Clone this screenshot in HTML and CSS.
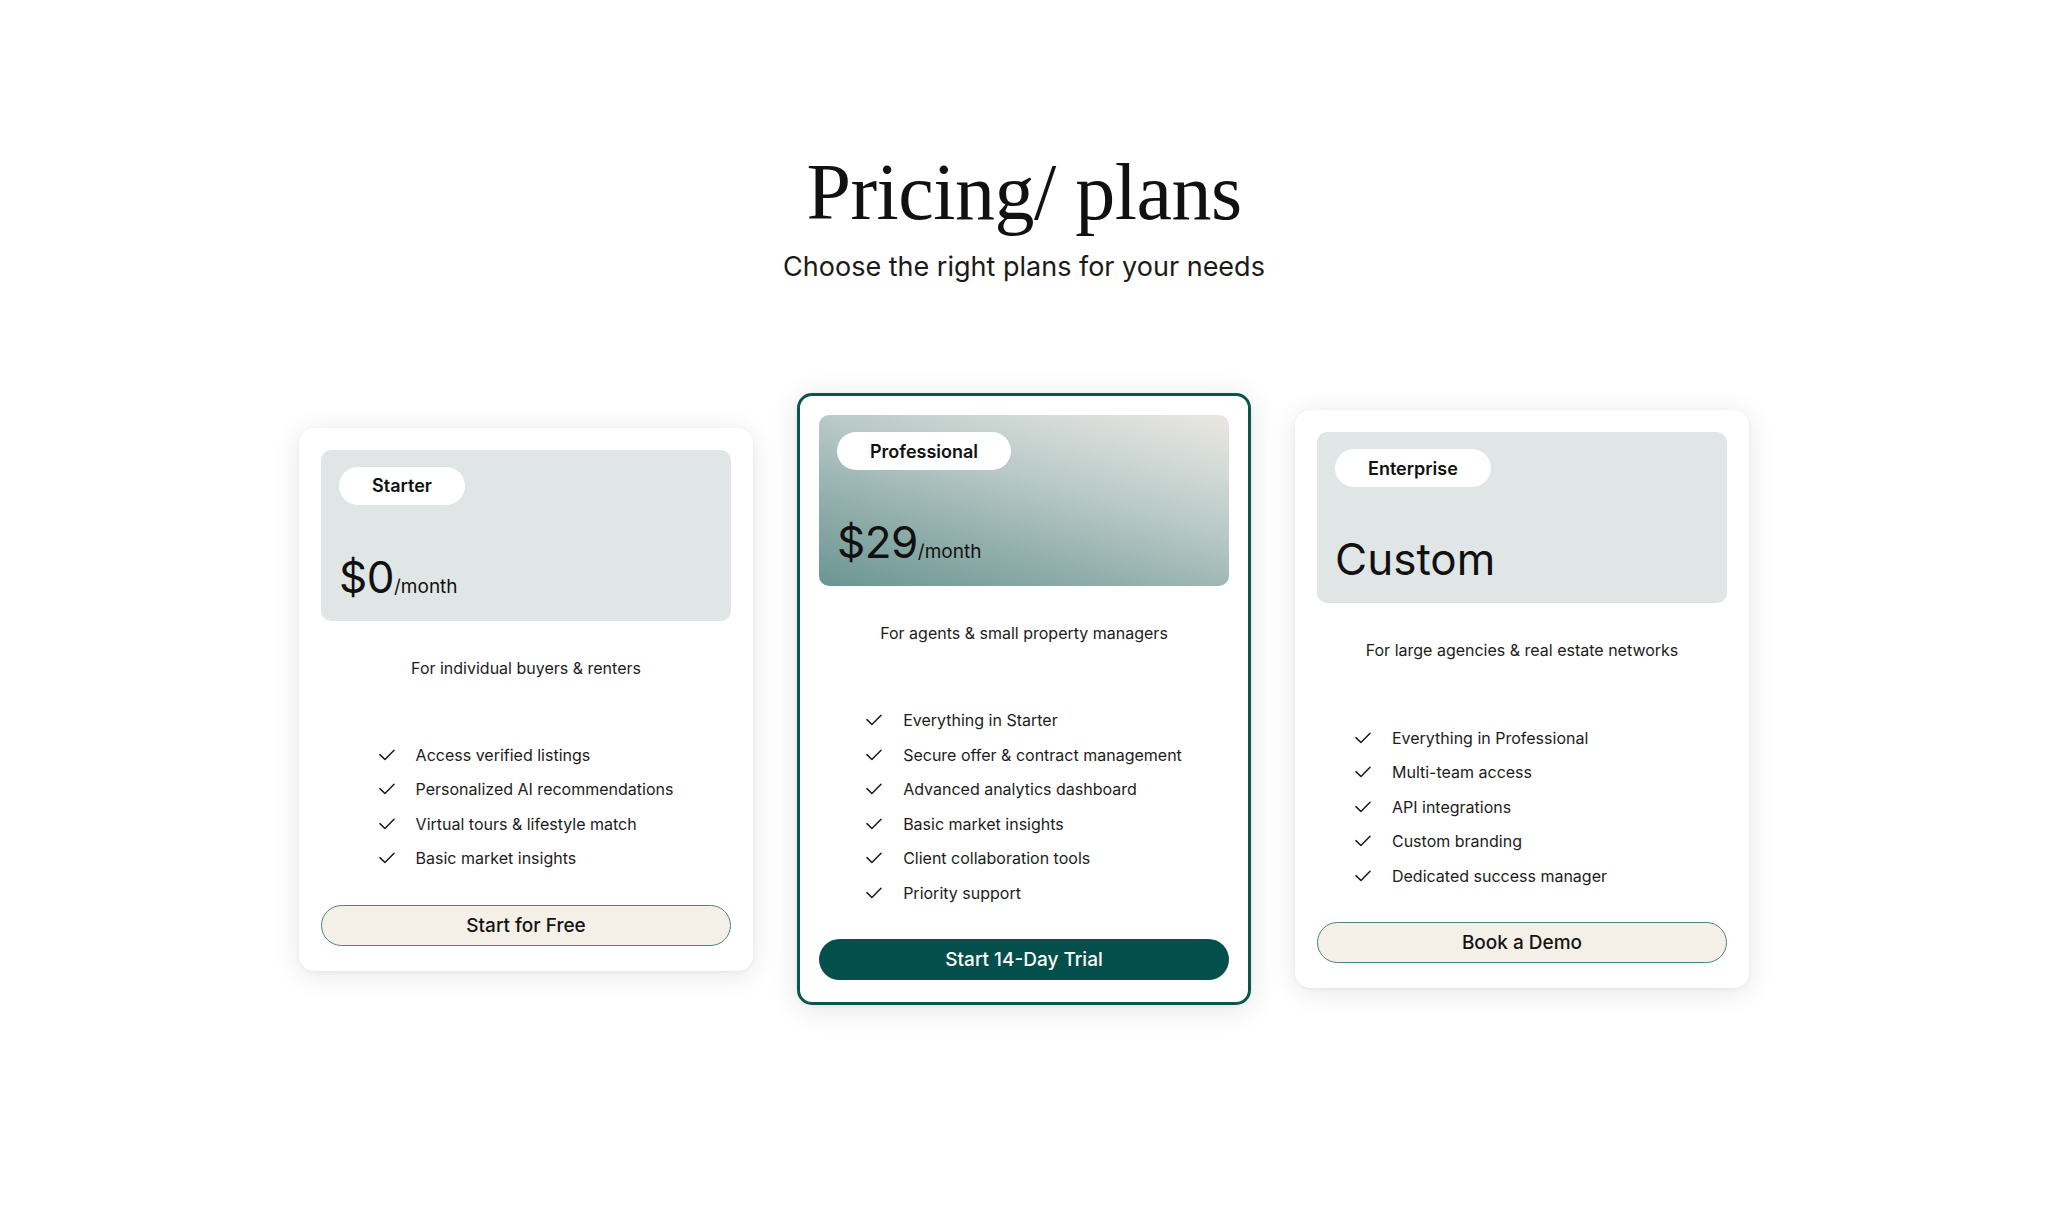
FILE: index.html
```html
<!DOCTYPE html>
<html lang="en">
<head>
<meta charset="utf-8">
<title>Pricing plans</title>
<link rel="stylesheet" href="styles.css">
</head>
<body>
<main class="page">
  <header class="intro">
    <h1 class="title">Pricing/ plans</h1>
    <p class="subtitle">Choose the right plans for your needs</p>
  </header>

  <section class="plans">
    <article class="card">
      <div class="panel">
        <span class="pill">Starter</span>
        <div class="price"><span class="amount">$0</span><span class="per">/month</span></div>
      </div>
      <p class="desc">For individual buyers &amp; renters</p>
      <ul class="features">
        <li><svg class="check" viewBox="0 0 17 12"><polyline points="1,5.6 6.3,10.8 16,1"/></svg><span>Access verified listings</span></li>
        <li><svg class="check" viewBox="0 0 17 12"><polyline points="1,5.6 6.3,10.8 16,1"/></svg><span>Personalized AI recommendations</span></li>
        <li><svg class="check" viewBox="0 0 17 12"><polyline points="1,5.6 6.3,10.8 16,1"/></svg><span>Virtual tours &amp; lifestyle match</span></li>
        <li><svg class="check" viewBox="0 0 17 12"><polyline points="1,5.6 6.3,10.8 16,1"/></svg><span>Basic market insights</span></li>
      </ul>
      <button class="btn btn-outline">Start for Free</button>
    </article>

    <article class="card card-featured">
      <div class="panel panel-gradient">
        <span class="pill">Professional</span>
        <div class="price"><span class="amount">$29</span><span class="per">/month</span></div>
      </div>
      <p class="desc">For agents &amp; small property managers</p>
      <ul class="features">
        <li><svg class="check" viewBox="0 0 17 12"><polyline points="1,5.6 6.3,10.8 16,1"/></svg><span>Everything in Starter</span></li>
        <li><svg class="check" viewBox="0 0 17 12"><polyline points="1,5.6 6.3,10.8 16,1"/></svg><span>Secure offer &amp; contract management</span></li>
        <li><svg class="check" viewBox="0 0 17 12"><polyline points="1,5.6 6.3,10.8 16,1"/></svg><span>Advanced analytics dashboard</span></li>
        <li><svg class="check" viewBox="0 0 17 12"><polyline points="1,5.6 6.3,10.8 16,1"/></svg><span>Basic market insights</span></li>
        <li><svg class="check" viewBox="0 0 17 12"><polyline points="1,5.6 6.3,10.8 16,1"/></svg><span>Client collaboration tools</span></li>
        <li><svg class="check" viewBox="0 0 17 12"><polyline points="1,5.6 6.3,10.8 16,1"/></svg><span>Priority support</span></li>
      </ul>
      <button class="btn btn-solid">Start 14-Day Trial</button>
    </article>

    <article class="card">
      <div class="panel">
        <span class="pill">Enterprise</span>
        <div class="price"><span class="custom">Custom</span></div>
      </div>
      <p class="desc">For large agencies &amp; real estate networks</p>
      <ul class="features features-offset">
        <li><svg class="check" viewBox="0 0 17 12"><polyline points="1,5.6 6.3,10.8 16,1"/></svg><span>Everything in Professional</span></li>
        <li><svg class="check" viewBox="0 0 17 12"><polyline points="1,5.6 6.3,10.8 16,1"/></svg><span>Multi-team access</span></li>
        <li><svg class="check" viewBox="0 0 17 12"><polyline points="1,5.6 6.3,10.8 16,1"/></svg><span>API integrations</span></li>
        <li><svg class="check" viewBox="0 0 17 12"><polyline points="1,5.6 6.3,10.8 16,1"/></svg><span>Custom branding</span></li>
        <li><svg class="check" viewBox="0 0 17 12"><polyline points="1,5.6 6.3,10.8 16,1"/></svg><span>Dedicated success manager</span></li>
      </ul>
      <button class="btn btn-outline">Book a Demo</button>
    </article>
  </section>
</main>
</body>
</html>
```

FILE: styles.css
```css
* {
  box-sizing: border-box;
}

html, body {
  margin: 0;
  padding: 0;
  background: #ffffff;
}

body {
  font-family: Inter, "Liberation Sans", Arial, sans-serif;
  color: #141414;
}

.page {
  width: 2048px;
  min-height: 1212px;
  padding-top: 152px;
  display: flex;
  flex-direction: column;
  align-items: center;
}

.intro {
  text-align: center;
}

.title {
  margin: 0;
  font-family: "Liberation Serif", "Times New Roman", serif;
  font-weight: 400;
  font-size: 80px;
  line-height: 80px;
  color: #111111;
  letter-spacing: -0.5px;
}

.subtitle {
  margin: 19px 0 0;
  font-size: 27px;
  line-height: 32px;
  font-weight: 400;
  color: #1a1a1a;
}

.plans {
  margin-top: 110px;
  display: flex;
  align-items: center;
  justify-content: center;
  gap: 44px;
}

.card {
  width: 454px;
  background: #ffffff;
  border-radius: 15px;
  padding: 22px 22px 25px;
  display: flex;
  flex-direction: column;
  box-shadow: 0 4px 28px rgba(0, 0, 0, 0.10), 0 1px 4px rgba(0, 0, 0, 0.05);
}

.card-featured {
  border: 3px solid #0b5450;
  padding: 19px 19px 22px;
  box-shadow: 0 4px 30px rgba(0, 0, 0, 0.11), 0 1px 4px rgba(0, 0, 0, 0.05);
}

.panel {
  height: 171px;
  border-radius: 10px;
  background: #e0e6e5;
  padding: 17px 18px 22px;
  display: flex;
  flex-direction: column;
  justify-content: space-between;
  align-items: flex-start;
}

.panel-gradient {
  background: linear-gradient(16deg, #6b9693 0%, #91aeab 30%, #b8c9c6 58%, #d3dad7 80%, #ebe7e1 100%);
}

.pill {
  display: inline-flex;
  align-items: center;
  height: 38px;
  padding: 0 33px;
  border-radius: 999px;
  background: #ffffff;
  font-size: 18px;
  font-weight: 600;
  color: #111111;
}

.price {
  display: flex;
  align-items: baseline;
  line-height: 1;
  color: #111111;
}

.amount {
  font-size: 44px;
  line-height: 1;
  font-weight: 400;
  letter-spacing: -0.5px;
}

.per {
  font-size: 19px;
  line-height: 1;
  font-weight: 400;
}

.custom {
  font-size: 44px;
  line-height: 1;
  font-weight: 400;
}

.desc {
  margin: 35px 0 0;
  text-align: center;
  font-size: 16px;
  line-height: 24px;
  color: #1c1c1c;
}

.features {
  list-style: none;
  margin: 58px 0 0;
  padding: 0;
  align-self: center;
}

.features-offset {
  margin-right: 82px;
}

.features li {
  display: flex;
  align-items: center;
  gap: 21px;
  height: 34.5px;
  font-size: 16px;
  color: #1c1c1c;
}

.check {
  width: 16px;
  height: 12px;
  flex: none;
  fill: none;
  stroke: #141414;
  stroke-width: 1.5;
  stroke-linecap: round;
  stroke-linejoin: round;
}

.btn {
  margin-top: 29px;
  height: 41px;
  width: 100%;
  border-radius: 999px;
  font-family: Inter, "Liberation Sans", Arial, sans-serif;
  font-size: 19px;
  font-weight: 500;
  cursor: pointer;
}

.btn-outline {
  background: #f5f0e7;
  border: 1.5px solid #4a8480;
  color: #141414;
}

.btn-solid {
  background: #034f4b;
  border: none;
  color: #ffffff;
}
```
